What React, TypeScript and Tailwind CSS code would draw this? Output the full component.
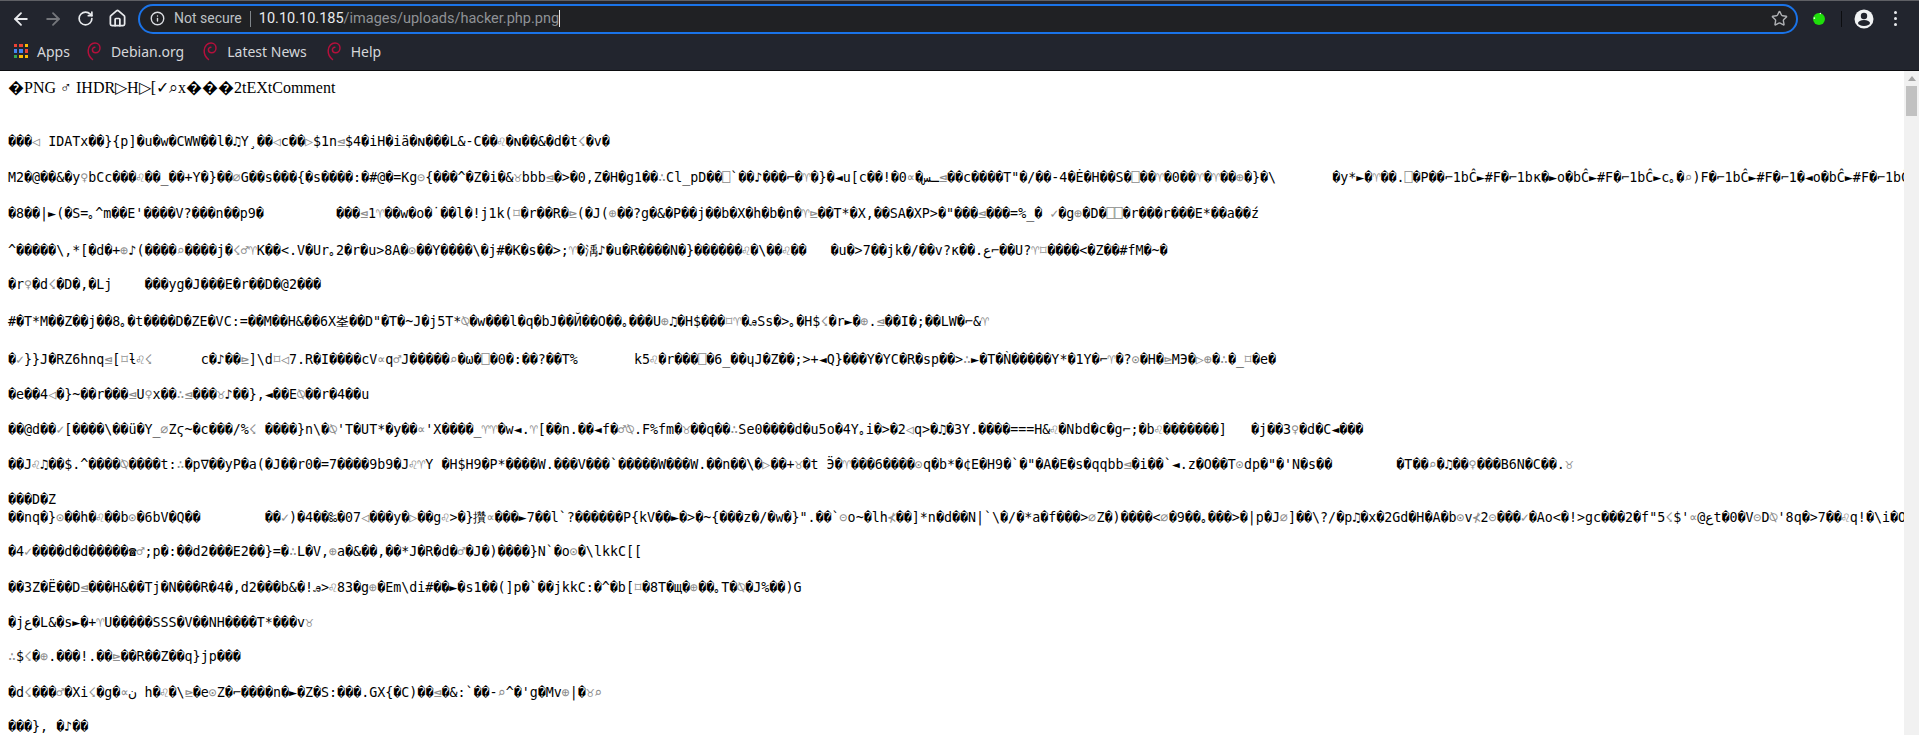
import { ArrowLeft, ArrowRight, RotateCw, Home, Info, Star } from "lucide-react";

const rows = [
  { h: "h-[36px]", text: "���◁ IDATx��}{p]�u�w�CWW��l�♫Y¸��◁c��▷$1n⊴$4�iH�iä�ɴ���L&-C��♌�ɴ��&�d�t☇�v�" },
  { h: "h-[36px]", text: "M2�@��&�y♀bCc���♌��_��+Y�}��⌀G��s���{�s����:�#@�=Kg⊝{���^�Z�i�&♉bbb⊴�>�0,Z�H�g1��∴Cl_pD��⎕`��♪���⌐�♈�}�◄u[c��!�0∝�ـس⊴��c����T\"�/��-4�Ė�H��S�⎕��♈�0��♈�♈��⊕�}�\\       �y*►�♈��.⎕�P��⌐1bĈ►#F�⌐1bκ�►o�bĈ►#F�⌐1bĈ►c｡�⌕)F�⌐1bĈ►#F�⌐1�◄o�bĈ►#F�⌐1bĈ►#F" },
  { h: "h-[37px]", text: "�8��|►(�S=｡^m��E'����V?���n��p9�         ���⊴1♈��w�o�˙��l�!j1k(⌑�r��R�⊵(�J(⊕��?g�&�P��j��b�X�h�b�n�♈⊵��T*�X,��SA�XP>�\"���⊴���=%_� ✓�g⊕�D�⎕⎕�r���r���E*��a��ź" },
  { h: "h-[34px]", text: "^�����\\,*[�d�+⊕♪(����⌕����j�☇♂♈K��<.V�Ur｡2�r�u>8A�⊙��Y����\\�j#�K�s��>;♈�渪♪�u�R����N�}������♌�\\��♌��   �u�>7��jk�/��v?κ��.ع⌐��U?♈⌑����<�Z��#fM�~�" },
  { h: "h-[37px]", text: "�r♀�d☇�D�,�Lj    ���yg�J���E�r��D�@2���" },
  { h: "h-[38px]", text: "#�T*M��Z��j��8｡�t����D�ZE�VC:=��M��H&��6X峑��D\"�T�~J�j5T*⍉�w���l�q�bJ��Й��O��｡���U⊕♫�H$���⌑♈�ꭿSs�>｡�H$☇�r►�⊕.⊴��I�;��LW�⌐&♈" },
  { h: "h-[35px]", text: "�✓}}J�RZ6hnq⊴[⌑ƚ♌☇      c�♪��⊵]\\d⌑◁7.R�I����cV∝q♂J�����⌕�ω�⎕�0�:��?��T%       k5♌�r���⎕�6_��ɥJ�Z��;>+◄Q}���Y�YC�R�sp��>∴►�T�Ǹ�����Y*�1Y�⌐♈�?⊙�H�⊵MЭ�▷⊕�∴�_⌑�e�" },
  { h: "h-[35px]", text: "�e��4◁�}~��r���⊴U♀x��∴⊴���♉♪��},◄��E⍉��r�4��u" },
  { h: "h-[35px]", text: "��@d��✓[����\\��ü�Y_⌀Zϛ~�c���/%☇ ����}n\\�⍉'T�UT*�y��∝'X����_♈♈�w◄.♈[��n.��◄f�♂⍉.F%fm�♉��q��∴Se0����d�u5o�4Y｡i�>�2◁q>�♫�3Y.����===H&♌�Nbd�c�g⌐;�b♌�������]   �j��3♀�d�C◄���" },
  { h: "h-[35px]", text: "��J♌♫��$.^����⍉����t:∴�p∇��yP�a(�J��r0�=7����9b9�J♌♈Y �H$H9�P*����W.���V���`�����W���W.��n��\\�▷��+♉�t Ӭ�♈���6����⊙q�b*�¢E�H9�`�\"�A�E�s�qqbb⊴�i��`◄.z�O��T⊙dp�\"�'N�s��        �T��⌕�♫��♀���B6N�C��.♉" },
  { h: "h-[18px]", text: "���D�Z" },
  { h: "h-[34px]", text: "��nq�}⊙��h�♌��b⊙�6bV�Q��        ��✓)�4��‰�07◁���y�▷��g♌>�}攢∝���►7��l`?������P{kV��►�>�~{���z�/�w�}\".��`⊝o~�lh⊀��]*n�d��N|`\\�/�*a�f���>⌀Z�)����<⌀�9��｡���>�|p�J⌀]��\\?/�p♫�x�2Gd�H�A�b⊙v⊀2⊝���✓�Ao<�!>gc���2�f\"ع@∝'$☇5t�0�V⊝D⍉'8q�>7��♌q!�\\i�O�" },
  { h: "h-[36px]", text: "�4✓����d�d�����☎♂;p�:��d2���E2��}=�∴L�V,⊕a�&��,��*J�R�d�♂�J�)����}N`�o⊙�\\lkkC[[" },
  { h: "h-[35px]", text: "��3Z�Ë��D⊴���H&��Tj�N���R�4�,d2���b&�!ꭿ>♌83�g⊕�Em\\di#��►�s1��(]p�`��jkkC:�^�b[⌑�8T�щ�⊕��｡T�⍉�J%��)G" },
  { h: "h-[34px]", text: "�jع�L&�s►�+♈U�����SSS�V��NH����T*���v♉" },
  { h: "h-[36px]", text: "∴$☇�⊕.���!.��⊵��R��Z��q}jp���" },
  { h: "h-[34px]", text: "�d☇���♂�Xi☇�g�∝ن h�♌�\\⊵�e⊙Z�⌐����n�►�Z�S:���.GX{�C)��⊴�&:`��-⌕^�'g�Mv⊕|�♉⌕" },
  { h: "h-[18px]", text: "���}, �♪��" },
];

// the fallback-font symbols come out thin and grey in the page dump
const thinSymbols = /([⊴⊵♈⊕⌑⊙⊝∝⍉⌕⌀♀♂♌♉☇⊀⎕✓◁▷∴])/;

function GarbledLine({ text }: { text: string }) {
  return (
    <>
      {text.split(thinSymbols).map((part, i) =>
        i % 2 === 1 ? (
          <span key={i} className="text-[#8c8c8c]">
            {part}
          </span>
        ) : (
          part
        )
      )}
    </>
  );
}

function DebianSwirl() {
  return (
    <svg width="14" height="20" viewBox="0 0 14 20" fill="none" className="shrink-0">
      <path
        d="M5.5 18.5C2.5 16 1 13 1.2 9.5 1.5 5 4.5 2 8 2c3 0 5 2.2 5 5 0 2.8-2 4.8-4.4 4.8-1.9 0-3.2-1.3-3.2-3 0-1.5 1.1-2.6 2.5-2.6"
        stroke="#b5103c"
        strokeWidth="1.5"
        strokeLinecap="round"
      />
    </svg>
  );
}

function AppsGrid() {
  const cells = ["bg-[#ea4335]", "bg-[#ea4335]", "bg-[#fbbc04]", "bg-[#4285f4]", "bg-[#4285f4]", "bg-[#ea4335]", "bg-[#34a853]", "bg-[#fbbc04]", "bg-[#fbbc04]"];
  return (
    <div className="grid grid-cols-3 gap-[2px] w-[14px] h-[14px] shrink-0">
      {cells.map((c, i) => (
        <span key={i} className={c} />
      ))}
    </div>
  );
}

function Bookmark({ label, className }: { label: string; className: string }) {
  return (
    <div className={`flex items-center gap-[10px] ${className}`}>
      <DebianSwirl />
      <span>{label}</span>
    </div>
  );
}

export default function App() {
  return (
    <div className="h-screen flex flex-col overflow-hidden bg-white">
      {/* Toolbar */}
      <div className="h-[36px] shrink-0 bg-[#22252e] border-t border-t-[#5f6065] flex items-center text-[#e8eaed] font-['Roboto',sans-serif]">
        <div className="w-[138px] shrink-0 flex items-center pl-[5px]">
          <div className="w-[32px] flex justify-center">
            <ArrowLeft size={20} strokeWidth={2.2} className="text-[#e8eaed]" />
          </div>
          <div className="w-[32px] flex justify-center">
            <ArrowRight size={20} strokeWidth={2.2} className="text-[#74767b]" />
          </div>
          <div className="w-[32px] flex justify-center">
            <RotateCw size={17} strokeWidth={2.4} className="text-[#e8eaed]" />
          </div>
          <div className="w-[32px] flex justify-center">
            <Home size={19} strokeWidth={2.2} className="text-[#e8eaed]" />
          </div>
        </div>
        <div className="w-[1660px] shrink-0 h-[30px] rounded-full border-2 border-[#1a73e8] bg-[#202124] flex items-center pl-[10px] pr-[8px]">
          <Info size={15} strokeWidth={2.2} className="text-[#dadce0] shrink-0" />
          <span className="ml-[9px] text-[14px] text-[#bdc1c6]">Not secure</span>
          <span className="mx-[8px] h-[16px] w-px bg-[#80868b]" />
          <span className="text-[14.5px] text-[#e8eaed]">10.10.10.185</span>
          <span className="text-[14.5px] text-[#8f9296]">/images/uploads/hacker.php.png</span>
          <span className="h-[17px] w-px bg-[#e8eaed]" />
          <Star size={17} strokeWidth={2} className="ml-auto text-[#aeb0b3]" />
        </div>
        <div className="flex-1 flex items-center pl-[14px]">
          <svg width="14" height="14" viewBox="0 0 15 14" className="shrink-0">
            <circle cx="7.5" cy="7" r="6.4" fill="#1fdf0b" />
            <circle cx="2.5" cy="6" r="1" fill="#e6ffe0" />
            <circle cx="9" cy="1.2" r="0.8" fill="#e6ffe0" />
          </svg>
          <span className="ml-[15px] h-[16px] w-px bg-[#0c0d10]" />
          <svg width="20" height="20" viewBox="0 0 20 20" className="ml-[12px] shrink-0">
            <circle cx="10" cy="10" r="9.5" fill="#f1f3f4" />
            <circle cx="10" cy="7" r="3.2" fill="#22252e" />
            <ellipse cx="10" cy="14" rx="6" ry="3" fill="#22252e" />
          </svg>
          <div className="ml-[20px] flex flex-col gap-[3px]">
            <span className="w-[3px] h-[3px] rounded-full bg-[#e8eaed]" />
            <span className="w-[3px] h-[3px] rounded-full bg-[#e8eaed]" />
            <span className="w-[3px] h-[3px] rounded-full bg-[#e8eaed]" />
          </div>
        </div>
      </div>

      {/* Bookmarks */}
      <div className="h-[35px] shrink-0 bg-[#22252e] border-b border-b-[#0c0d10] flex items-center pl-[14px] pb-[4px] text-[14px] text-[#d5d7da] font-['Noto_Sans',sans-serif]">
        <AppsGrid />
        <span className="ml-[9px]">Apps</span>
        <Bookmark label="Debian.org" className="ml-[17px]" />
        <Bookmark label="Latest News" className="ml-[19px]" />
        <Bookmark label="Help" className="ml-[20px]" />
      </div>

      {/* Page + scrollbar */}
      <div className="flex-1 min-h-0 flex">
        <div className="flex-1 min-w-0 overflow-hidden pl-[8px] pt-[8px] text-black">
          <div className="h-[54px] whitespace-pre font-['Liberation_Serif',serif] text-[16px] leading-[18px]">�PNG ♂ IHDR▷H▷[✓⌕x���2tEXtComment</div>
          {rows.map((row, i) => (
            <div key={i} className={`${row.h} whitespace-pre font-['DejaVu_Sans_Mono',monospace] text-[13.33px] leading-[18px]`}>
              <GarbledLine text={row.text} />
            </div>
          ))}
        </div>
        <div className="w-[15px] shrink-0 bg-[#f1f1f1] flex flex-col items-center">
          <div className="h-[15px] flex items-center justify-center">
            <span className="w-0 h-0 border-x-[4px] border-x-transparent border-b-[5px] border-b-[#a3a3a3]" />
          </div>
          <div className="w-[11px] h-[30px] bg-[#c1c1c1]" />
        </div>
      </div>
    </div>
  );
}
